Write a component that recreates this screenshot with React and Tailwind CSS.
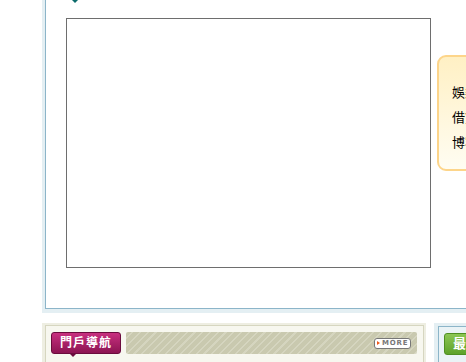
import React from 'react';

const links = ['娛樂新聞', '借貸理財', '博客專欄'];

function App() {
  return (
    <div className="w-[466px] h-[362px] overflow-hidden bg-white font-['Liberation_Sans','Noto_Sans_CJK_TC',sans-serif]">
      {/* main panel, its top lies above the window */}
      <div className="ml-[42px] w-[600px] bg-[#e4eff3] pl-[3px] pb-[4px]">
        <div className="h-[309px] border-l border-b border-[#8cb5c9] bg-white">
          <div className="ml-[26px] w-0 h-0 border-l-[3px] border-r-[3px] border-t-[3px] border-l-transparent border-r-transparent border-t-[#0b6b6b]" />
          <div className="flex items-start mt-[15px] ml-[20px]">
            <div className="shrink-0 w-[365px] h-[250px] border border-[#6e6e6e] bg-white" />
            <div className="shrink-0 ml-[6px] mt-[37px] w-[200px] h-[116px] rounded-[9px] border-2 border-[#fdd58a] bg-[linear-gradient(#fff0c4,#fffdf2)] pt-[23px] pl-[13px]">
              {links.map((t) => (
                <div key={t} className="h-[25px] text-[13px] leading-[25px] text-black whitespace-nowrap">{t}</div>
              ))}
            </div>
          </div>
        </div>
      </div>

      <div className="flex mt-[10px] ml-[42px] w-[700px]">
        {/* portal navigation */}
        <div className="shrink-0 w-[384px] bg-[#eeeee2] pl-[3px] pt-[2px] pr-[2px]">
          <div className="h-[60px] border-l border-t border-r border-[#d6d6c0] bg-[#f7f7ef] flex items-start pt-[6px] pl-[5px] pr-[6px] gap-[5px]">
            <div className="relative">
              <div className="w-[70px] h-[22px] rounded-[3px] border border-[#6b0b3d] bg-[linear-gradient(#c8307f,#8c1452)] flex items-center justify-center text-white text-[12px] font-bold tracking-[1px]">
                門戶導航
              </div>
              <div className="absolute left-[19px] top-[22px] w-0 h-0 border-l-[3px] border-r-[3px] border-t-[3px] border-l-transparent border-r-transparent border-t-[#6b0b3d]" />
            </div>
            <div className="flex-1 h-[22px] rounded-[2px] bg-[repeating-linear-gradient(135deg,#c9c9af_0px,#c9c9af_4px,#d5d5bf_4px,#d5d5bf_5.5px)] flex items-center justify-end pr-[6px]">
              <div className="w-[37px] h-[11px] rounded-[3px] border border-[#777] bg-white flex items-center pl-[2px] gap-[2px]">
                <div className="shrink-0 w-0 h-0 border-t-[2px] border-b-[2px] border-l-[3px] border-t-transparent border-b-transparent border-l-[#f05a1a]" />
                <span className="text-[7px] leading-none font-bold text-[#777] tracking-[0.8px] font-['DejaVu_Sans',sans-serif]">MORE</span>
              </div>
            </div>
          </div>
        </div>

        {/* latest */}
        <div className="shrink-0 ml-[8px] w-[200px] bg-[#e4eff3] pl-[4px] pt-[3px]">
          <div className="h-[60px] border-l border-t border-[#8cb5c9] bg-[#eaf3f6] pl-[5px] pt-[6px]">
            <div className="w-[80px] h-[22px] rounded-[3px] border border-[#4f8f22] bg-[linear-gradient(#8cc654,#5ea22a)] text-white text-[13px] font-bold leading-[20px] pl-[8px]">
              最新
            </div>
          </div>
        </div>
      </div>
    </div>
  );
}

export default App;
